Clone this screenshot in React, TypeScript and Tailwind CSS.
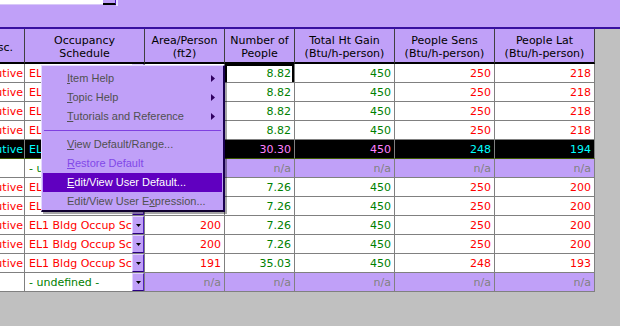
import React from 'react';

type Row = {
    desc: string;
    sched: string;
    area: string;
    people: string;
    gain: string;
    sens: string;
    lat: string;
    kind: 'normal' | 'selected' | 'undef';
};

const rows: Row[] = [
    { desc: 'Executive', sched: 'EL1 Bldg Occup Sch', area: '200', people: '8.82', gain: '450', sens: '250', lat: '218', kind: 'normal' },
    { desc: 'Executive', sched: 'EL1 Bldg Occup Sch', area: '200', people: '8.82', gain: '450', sens: '250', lat: '218', kind: 'normal' },
    { desc: 'Executive', sched: 'EL1 Bldg Occup Sch', area: '200', people: '8.82', gain: '450', sens: '250', lat: '218', kind: 'normal' },
    { desc: 'Executive', sched: 'EL1 Bldg Occup Sch', area: '200', people: '8.82', gain: '450', sens: '250', lat: '218', kind: 'normal' },
    { desc: 'Executive', sched: 'EL1 Bldg Occup Sch', area: '100', people: '30.30', gain: '450', sens: '248', lat: '194', kind: 'selected' },
    { desc: '', sched: '- undefined -', area: 'n/a', people: 'n/a', gain: 'n/a', sens: 'n/a', lat: 'n/a', kind: 'undef' },
    { desc: 'Executive', sched: 'EL1 Bldg Occup Sch', area: '200', people: '7.26', gain: '450', sens: '250', lat: '200', kind: 'normal' },
    { desc: 'Executive', sched: 'EL1 Bldg Occup Sch', area: '200', people: '7.26', gain: '450', sens: '250', lat: '200', kind: 'normal' },
    { desc: 'Executive', sched: 'EL1 Bldg Occup Sch', area: '200', people: '7.26', gain: '450', sens: '250', lat: '200', kind: 'normal' },
    { desc: 'Executive', sched: 'EL1 Bldg Occup Sch', area: '200', people: '7.26', gain: '450', sens: '250', lat: '200', kind: 'normal' },
    { desc: 'Executive', sched: 'EL1 Bldg Occup Sch', area: '191', people: '35.03', gain: '450', sens: '248', lat: '193', kind: 'normal' },
    { desc: '', sched: '- undefined -', area: 'n/a', people: 'n/a', gain: 'n/a', sens: 'n/a', lat: 'n/a', kind: 'undef' },
];

const headers = [
    ['Desc.', ''],
    ['Occupancy', 'Schedule'],
    ['Area/Person', '(ft2)'],
    ['Number of', 'People'],
    ['Total Ht Gain', '(Btu/h-person)'],
    ['People Sens', '(Btu/h-person)'],
    ['People Lat', '(Btu/h-person)'],
];

const gridCols = 'grid grid-cols-[25px_120px_80px_70px_100px_100px_100px] w-[595px]';

const DropButton = () => (
    <div className="w-[12px] h-full bg-[#c0a0f8] border-t border-l border-[#e0d0ff] border-r border-r-[#5020c0] border-b border-b-[#2a0080] flex items-center justify-center shrink-0">
        <svg width="5" height="3" viewBox="0 0 5 3">
            <path d="M0 0h5L2.5 3z" fill="#000" />
        </svg>
    </div>
);

const NumCell = ({ value, color, bg, extra = '' }: { value: string; color: string; bg: string; extra?: string }) => (
    <div className={`h-[19px] border-r border-b border-[#808080] flex items-center justify-end pr-[3px] ${bg} ${color} ${extra}`}>
        {value}
    </div>
);

const DataRow = ({ row, first }: { row: Row; first: boolean }) => {
    if (row.kind === 'undef') {
        return (
            <div className={gridCols}>
                <div className="h-[19px] bg-white border-r border-b border-[#808080]" />
                <div className="h-[19px] bg-white border-r border-b border-[#808080] flex items-center pl-[4px] text-[#008000]">
                    <span className="flex-1 whitespace-nowrap overflow-hidden">{row.sched}</span>
                    <DropButton />
                </div>
                {[row.area, row.people, row.gain, row.sens, row.lat].map((v, i) => (
                    <NumCell key={i} value={v} color="text-[#808080]" bg="bg-[#c0a0f8]" />
                ))}
            </div>
        );
    }
    const sel = row.kind === 'selected';
    const bg = sel ? 'bg-black' : 'bg-white';
    const textA = sel ? 'text-[#00ffff]' : 'text-[#ff0000]';
    const textG = sel ? 'text-[#ff80ff]' : 'text-[#008000]';
    const lineB = sel ? 'border-b-[#3c5a00]' : '';
    return (
        <div className={gridCols}>
            <div className={`h-[19px] ${bg} ${textA} border-r border-b border-[#808080] ${lineB} flex justify-end items-center overflow-hidden whitespace-nowrap pr-[1px]`}>
                {row.desc}
            </div>
            <div className={`h-[19px] ${bg} ${textA} border-r border-b border-[#808080] ${lineB} flex items-center pl-[4px]`}>
                <span className="flex-1 whitespace-nowrap overflow-hidden">{row.sched}</span>
                <DropButton />
            </div>
            <NumCell value={row.area} color={textA} bg={bg} extra={lineB} />
            <NumCell
                value={row.people}
                color={textG}
                bg={bg}
                extra={`${lineB} ${first ? 'shadow-[inset_2px_2px_0_0_#000,inset_-2px_0_0_0_#000]' : ''}`}
            />
            <NumCell value={row.gain} color={textG} bg={bg} extra={lineB} />
            <NumCell value={row.sens} color={textA} bg={bg} extra={lineB} />
            <NumCell value={row.lat} color={textA} bg={bg} extra={lineB} />
        </div>
    );
};

const Arrow = () => (
    <svg width="4" height="7" viewBox="0 0 4 7" className="absolute right-[7px] top-[6px]">
        <path d="M0 0L4 3.5L0 7z" fill="#300060" />
    </svg>
);

const MenuItem = ({ children, arrow, active, disabled }: { children: React.ReactNode; arrow?: boolean; active?: boolean; disabled?: boolean }) => (
    <div
        className={`relative h-[19px] mx-[1px] pl-[24px] flex items-center whitespace-nowrap ${
            active ? 'bg-[#6000c0] text-white' : disabled ? 'text-[#8048e8]' : 'text-[#505050]'
        }`}
    >
        {children}
        {arrow && <Arrow />}
    </div>
);

const ContextMenu = () => (
    <div className="absolute left-[41px] top-[65px] w-[184px] h-[147px] bg-[#c0a0f8] border-t border-l border-[#e4d8ff] border-r-2 border-b-2 border-r-[#1a0050] border-b-[#100030] shadow-[2px_2px_0_0_rgba(0,0,0,0.35)] pt-[3px] font-['Liberation_Sans',Arial,sans-serif] text-[11px]">
        <MenuItem arrow><span><u>I</u>tem Help</span></MenuItem>
        <MenuItem arrow><span><u>T</u>opic Help</span></MenuItem>
        <MenuItem arrow><span><u>T</u>utorials and Reference</span></MenuItem>
        <div className="h-[9px] flex items-center mx-[2px]">
            <div className="w-full h-[1px] bg-[#8040e0]" />
        </div>
        <MenuItem><span><u>V</u>iew Default/Range...</span></MenuItem>
        <MenuItem disabled><span><u>R</u>estore Default</span></MenuItem>
        <MenuItem active><span><u>E</u>dit/View User Default...</span></MenuItem>
        <MenuItem><span>Edit/View User E<u>x</u>pression...</span></MenuItem>
    </div>
);

const App = () => {
    return (
        <div className="relative w-[620px] h-[326px] overflow-hidden bg-[#c0c0c0] font-['DejaVu_Sans',Verdana,sans-serif] text-[11px] leading-none">
            {/* top panel */}
            <div className="h-[29px] bg-[#c0a0f8] border-b-2 border-[#3810a0] flex items-start">
                <div className="w-[103px] h-[5px] bg-white border-b border-[#d8c8f8]" />
                <div className="w-[13px] h-[5px] bg-[#c0a0f8] border-r border-[#5020c0] border-b-2 border-b-black" />
                <div className="w-[2px] h-[6px] bg-[#e8e0ff]" />
            </div>

            {/* header */}
            <div className={gridCols}>
                {headers.map(([a, b], i) => (
                    <div
                        key={i}
                        className={`h-[35px] bg-[#c0a0f8] border-r border-[#404040] border-b-2 border-b-black flex flex-col justify-center pt-[3px] text-black leading-[13px] whitespace-nowrap overflow-hidden ${
                            i === 0 ? 'items-end pr-[11px]' : 'items-center'
                        }`}
                    >
                        <span>{a}</span>
                        {b && <span>{b}</span>}
                    </div>
                ))}
            </div>

            {/* data rows */}
            {rows.map((row, i) => (
                <DataRow key={i} row={row} first={i === 0} />
            ))}

            <ContextMenu />
        </div>
    );
};

export default App;
